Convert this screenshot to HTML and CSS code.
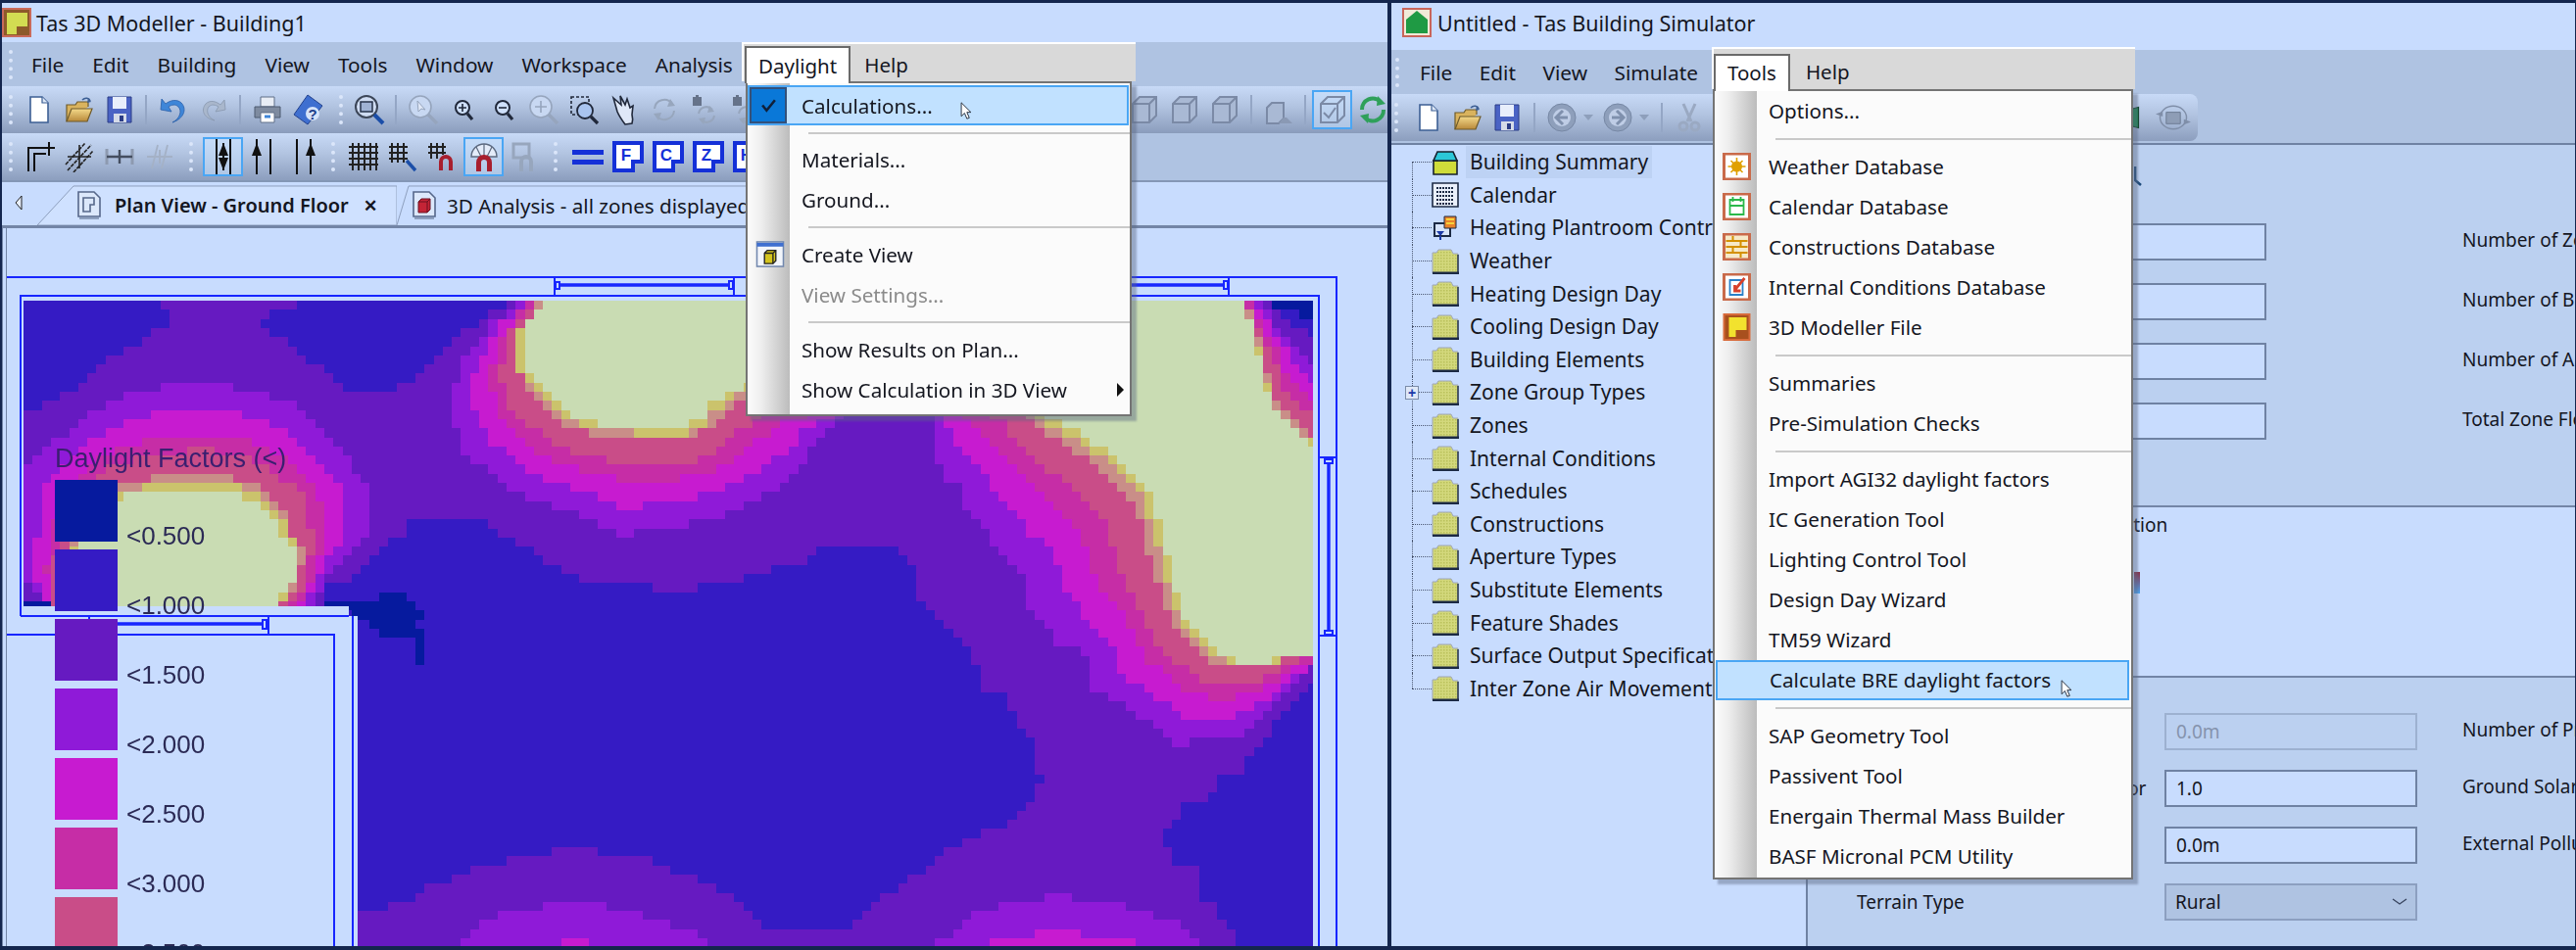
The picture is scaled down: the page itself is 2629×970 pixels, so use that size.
FILE: index.html
```html
<!DOCTYPE html>
<html lang="en">
<head>
<meta charset="utf-8">
<title>Tas</title>
<link rel="stylesheet" href="styles.css">
</head>
<body>
<svg class="defs" width="0" height="0">
  <defs>
    <linearGradient id="gfold" x1="0" y1="0" x2="0" y2="1"><stop offset="0" stop-color="#f4d98a"/><stop offset="1" stop-color="#b8893a"/></linearGradient>
    <pattern id="hatch" width="3" height="3" patternUnits="userSpaceOnUse"><rect width="3" height="3" fill="#d3d87c"/><rect width="1.5" height="1.5" fill="#b9c05a"/></pattern>
    <symbol id="doc" viewBox="0 0 32 32"><path d="M7 3h12l6 6v20H7z" fill="#fff" stroke="#3d5f94" stroke-width="1.6"/><path d="M19 3v6h6" fill="#dfe9f8" stroke="#3d5f94" stroke-width="1.2"/></symbol>
    <symbol id="plandoc" viewBox="0 0 26 30"><path d="M2 1h16l6 6v19H2z" fill="#dce8fb" stroke="#56678a" stroke-width="1.6"/><path d="M7 7h11v7h-4v7H7z" fill="none" stroke="#56678a" stroke-width="1.6"/><path d="M3 28h20" stroke="#8ea0bf" stroke-width="2"/></symbol>
    <symbol id="doc3d" viewBox="0 0 26 30"><path d="M2 1h16l6 6v19H2z" fill="#dce8fb" stroke="#56678a" stroke-width="1.6"/><path d="M7 11l3-3h9v11l-3 3H7z" fill="#c42436" stroke="#6a1020"/><path d="M7 11h9v11M16 11l3-3" fill="none" stroke="#6a1020"/><path d="M3 28h20" stroke="#8ea0bf" stroke-width="2"/></symbol>
    <symbol id="folder" viewBox="0 0 32 32"><path d="M3 28V11h9l2-3h11v5" fill="#d9b35e" stroke="#6e5a2a" stroke-width="1.2"/><path d="M3 28l5-13h21l-5 13z" fill="url(#gfold)" stroke="#6e5a2a" stroke-width="1.2"/><path d="M19 6c3-3 7-2 8 1" fill="none" stroke="#3d5f94" stroke-width="1.6"/><path d="M25 4l3 4-4 1z" fill="#3d5f94"/></symbol>
    <symbol id="save" viewBox="0 0 32 32"><path d="M4 3h24v26H4z" fill="#4a63c4" stroke="#2b3c86"/><path d="M9 3h14v12H9z" fill="#e8eefb"/><path d="M10 20h13v9H10z" fill="#d5dbe8"/><path d="M16 22h4v6h-4z" fill="#2b3c86"/></symbol>
    <symbol id="undo" viewBox="0 0 32 32"><path d="M15 29c8-4 10-12 6-16-3-3-7-2-10 0l3 5-11-2 1-11 4 5c5-4 12-5 16-1 6 6 3 16-9 20z" fill="#3f86d8" stroke="#2a5ea8" stroke-width=".8"/></symbol>
    <symbol id="redo" viewBox="0 0 32 32"><path d="M17 27c-7-3-9-10-6-14 3-3 7-2 10 0l-3 5 10-2-1-10-4 5c-5-4-11-5-15-1-5 6-3 14 9 17z" fill="#a9b7cc" stroke="#8897ad" stroke-width=".8"/></symbol>
    <symbol id="print" viewBox="0 0 32 32"><path d="M9 3h14v10H9z" fill="#e8edf5" stroke="#5f6f88"/><path d="M3 13h26v11H3z" fill="#7e8ba0" stroke="#4d5a70"/><path d="M9 19h14v10H9z" fill="#fff" stroke="#5f6f88"/><path d="M13 23h6" stroke="#3f86d8" stroke-width="3"/></symbol>
    <symbol id="book" viewBox="0 0 32 32"><path d="M16 1L31 12 16 31 2 21z" fill="#3f6fd0" stroke="#23418c"/><circle cx="21" cy="20" r="7" fill="#d7e4fa"/><text x="21" y="26" font-size="15" font-family="Liberation Sans" font-weight="700" text-anchor="middle" fill="#23418c">?</text></symbol>
    <symbol id="zoom" viewBox="0 0 32 32"><circle cx="13" cy="13" r="11" fill="#cfdcf2" stroke="#3c4658" stroke-width="2"/><rect x="7" y="8" width="12" height="10" fill="#9fb2d4" stroke="#26324a" stroke-width="1.5"/><path d="M21 21l9 9" stroke="#1b4ea8" stroke-width="4"/></symbol>
    <symbol id="magg" viewBox="0 0 32 32"><circle cx="13" cy="13" r="11" fill="#c8d8f2" stroke="#96a5bd" stroke-width="1.6"/><path d="M21 21l9 9" stroke="#96a5bd" stroke-width="3.4"/><path d="M10 7l1 11 3-3 4 1z" fill="#dfe7f6" stroke="#96a5bd"/></symbol>
    <symbol id="magp" viewBox="0 0 32 32"><circle cx="15" cy="14" r="7" fill="#cfe0fa" stroke="#20283a" stroke-width="2"/><path d="M15 10v8M11 14h8" stroke="#20283a" stroke-width="1.6"/><path d="M20 20l5 6" stroke="#20283a" stroke-width="3.2"/></symbol>
    <symbol id="magm" viewBox="0 0 32 32"><circle cx="15" cy="14" r="7" fill="#cfe0fa" stroke="#20283a" stroke-width="2"/><path d="M11 14h8" stroke="#20283a" stroke-width="1.6"/><path d="M20 20l5 6" stroke="#20283a" stroke-width="3.2"/></symbol>
    <symbol id="magpg" viewBox="0 0 32 32"><circle cx="13" cy="13" r="11" fill="#c8d8f2" stroke="#96a5bd" stroke-width="1.6"/><path d="M13 7v12M7 13h12" stroke="#96a5bd" stroke-width="1.6"/><path d="M21 21l9 9" stroke="#96a5bd" stroke-width="3.4"/></symbol>
    <symbol id="magbox" viewBox="0 0 32 32"><path d="M3 3h18v18H3z" fill="none" stroke="#20283a" stroke-width="1.6" stroke-dasharray="3 2"/><circle cx="17" cy="17" r="8" fill="#a9c4ef" stroke="#20283a" stroke-width="1.8"/><path d="M23 23l7 7" stroke="#20283a" stroke-width="3.2"/></symbol>
    <symbol id="hand" viewBox="0 0 32 32"><path d="M5 4l8 7-1-9 5 9 2-6 3 9 3-2-1 9c1 4 1 6 0 9l-7 1c-3-4-6-8-8-13z" fill="#dfe8f8" stroke="#20283a" stroke-width="1.6"/></symbol>
    <symbol id="rot" viewBox="0 0 32 32"><path d="M6 15a10 10 0 0 1 18-5M26 17a10 10 0 0 1-18 5" fill="none" stroke="#97a6bd" stroke-width="2"/><path d="M22 5l5 7-8 1zM10 27l-5-7 8-1z" fill="#97a6bd"/></symbol>
    <symbol id="rot2" viewBox="0 0 32 32"><path d="M4 3h9v9H4z" fill="#66738a"/><path d="M7 1h3v3H7z" fill="#66738a"/><path d="M10 20a8 8 0 0 1 14-4M26 22a8 8 0 0 1-14 4" fill="none" stroke="#97a6bd" stroke-width="2"/><path d="M21 12l5 6-7 1zM15 31l-5-6 7-1z" fill="#97a6bd"/></symbol>
    <symbol id="cube" viewBox="0 0 32 32"><path d="M4 10l7-7h17v19l-7 7H4z" fill="#a9b9d4" stroke="#7b8aa6" stroke-width="2"/><path d="M4 10h17v19M21 10l7-7" fill="none" stroke="#7b8aa6" stroke-width="2"/></symbol>
    <symbol id="cubef" viewBox="0 0 32 32"><path d="M4 14l5-5h12v16l-5 5H4z" fill="#a9b9d4" stroke="#7b8aa6" stroke-width="2"/><path d="M16 30h14l-6-6h-3" fill="#8a99b4"/></symbol>
    <symbol id="cubec" viewBox="0 0 32 32"><path d="M4 10l7-7h17v19l-7 7H4z" fill="none" stroke="#7b8aa6" stroke-width="2"/><path d="M4 10h17v19M21 10l7-7" fill="none" stroke="#7b8aa6" stroke-width="2"/><path d="M7 19l5 5 7-10" fill="none" stroke="#7b8aa6" stroke-width="2"/></symbol>
    <symbol id="refresh" viewBox="0 0 32 32"><path d="M5 16a11 11 0 0 1 19-8M27 16a11 11 0 0 1-19 8" fill="none" stroke="#2fa05a" stroke-width="4"/><path d="M21 2l8 8-9 2zM11 30l-8-8 9-2z" fill="#2fa05a"/></symbol>
    <symbol id="wall" viewBox="0 0 32 32"><path d="M5 31V7h20M11 31V13h12" fill="none" stroke="#111" stroke-width="2"/><path d="M26 1v14M20 7h12" stroke="#111" stroke-width="2"/></symbol>
    <symbol id="cross" viewBox="0 0 32 32"><path d="M4 30L28 4M2 24L22 2M10 32L30 10" fill="none" stroke="#222" stroke-width="1.6" stroke-dasharray="4 1"/><path d="M16 4v24M4 16h24" stroke="#222" stroke-width="1.6"/></symbol>
    <symbol id="dim" viewBox="0 0 32 32"><path d="M3 8v16M29 8v16" stroke="#8d9ab0" stroke-width="3"/><path d="M16 9v14M3 16h26" stroke="#444e60" stroke-width="2.4"/></symbol>
    <symbol id="dimg" viewBox="0 0 32 32"><path d="M8 28L14 4M18 28L24 4" stroke="#a4b1c6" stroke-width="1.8"/><path d="M3 16h26M16 9v14" stroke="#a4b1c6" stroke-width="2"/></symbol>
    <symbol id="v1" viewBox="0 0 32 40"><path d="M9 2v36M23 2v36M16 6v28" stroke="#111" stroke-width="2"/><path d="M16 6l-5 13h10zM16 34l-5-13h10z" fill="#111"/></symbol>
    <symbol id="v2" viewBox="0 0 32 40"><path d="M9 2v36M23 2v36" stroke="#111" stroke-width="2"/><path d="M9 6l-5 13h10z" fill="#111"/></symbol>
    <symbol id="v3" viewBox="0 0 32 40"><path d="M9 2v36M23 2v36" stroke="#111" stroke-width="2"/><path d="M23 6l-5 13h10z" fill="#111"/></symbol>
    <symbol id="grid" viewBox="0 0 32 32"><path d="M5 2v28M11 2v28M17 2v28M23 2v28M29 2v28M1 6h30M1 12h30M1 18h30M1 24h30" stroke="#222" stroke-width="2"/></symbol>
    <symbol id="gridm" viewBox="0 0 32 32"><path d="M4 2v20M10 2v20M16 2v20M1 6h19M1 12h19M1 18h19" stroke="#222" stroke-width="2"/><path d="M19 20l9 10" stroke="#1b4ea8" stroke-width="3.4"/></symbol>
    <symbol id="gridu" viewBox="0 0 32 32"><path d="M3 2v16M9 2v16M15 2v12M0 6h18M0 12h18" stroke="#222" stroke-width="2"/><path d="M11 30V21a7 7 0 0 1 14 0v9h-4v-9a3 3 0 0 0-6 0v9z" fill="#a81f2e"/></symbol>
    <symbol id="arcu" viewBox="0 0 32 32"><path d="M3 16a13 13 0 0 1 26 0z" fill="#e4ecfa" stroke="#5d6a80" stroke-width="1.4"/><path d="M16 3v13M8 6l5 10M24 6l-5 10" stroke="#5d6a80" stroke-width="1.2"/><path d="M8 31V22a8 8 0 0 1 16 0v9h-5v-9a3 3 0 0 0-6 0v9z" fill="#a81f2e"/></symbol>
    <symbol id="grayu" viewBox="0 0 32 32"><path d="M5 3h16v14H5z" fill="none" stroke="#97a6bd" stroke-width="3"/><path d="M11 31V21a7 7 0 0 1 14 0v10h-4V21a3 3 0 0 0-6 0v10z" fill="#97a6bd"/></symbol>
    <symbol id="sum" viewBox="0 0 28 26"><path d="M2 11h24v14H2z" fill="#cfdc3a" stroke="#16202e" stroke-width="1.6"/><path d="M6 2h16l4 9H2z" fill="#2cc7d8" stroke="#16202e" stroke-width="1.6"/></symbol>
    <symbol id="cal" viewBox="0 0 28 26"><path d="M1 1h26v24H1z" fill="#eaf0fb" stroke="#1c2a44" stroke-width="1.6"/><path d="M5 6h18M5 10h18M5 14h18M5 18h18M5 22h18" stroke="#1c2a44" stroke-width="2.2" stroke-dasharray="2 1"/></symbol>
    <symbol id="plant" viewBox="0 0 28 26"><path d="M3 8h16v13H3z" fill="#d7e4fa" stroke="#1c2a44" stroke-width="2"/><path d="M13 1h12v12H13z" fill="#e8822a" stroke="#1c2a44"/><path d="M15 4h8M15 8h8" stroke="#f6d23c" stroke-width="2"/><path d="M5 16l4 5 4-5z" fill="#1b3aa8"/><path d="M9 21v4" stroke="#1b3aa8" stroke-width="2"/></symbol>
    <symbol id="tfold" viewBox="0 0 28 26"><path d="M1 25V4h4l2-3h13l2 4h5v20z" fill="url(#hatch)" stroke="#9fa7b8" stroke-width="1"/><path d="M1 25h27" stroke="#1c2a44" stroke-width="3"/><path d="M27 6v19" stroke="#1c2a44" stroke-width="1.4"/></symbol>
    <symbol id="w-sun" viewBox="0 0 28 28"><rect x="1" y="1" width="26" height="26" fill="#fff" stroke="#c96a4a" stroke-width="3"/><circle cx="14" cy="14" r="5.5" fill="#e0a000"/><path d="M14 5v18M5 14h18M8 8l12 12M20 8L8 20" stroke="#e0a000" stroke-width="1.6"/></symbol>
    <symbol id="w-cal" viewBox="0 0 28 28"><rect x="1" y="1" width="26" height="26" fill="#fff" stroke="#c96a4a" stroke-width="3"/><path d="M7 7h14v15H7zM7 13h14M10 4v5M18 4v5" fill="none" stroke="#2ab84a" stroke-width="1.8"/></symbol>
    <symbol id="w-con" viewBox="0 0 28 28"><rect x="1" y="1" width="26" height="26" fill="#f6e9c8" stroke="#c96a4a" stroke-width="3"/><path d="M3 8h22M3 14h22M3 20h22M10 3v5M18 8v6M10 14v6M18 20v5" stroke="#d49000" stroke-width="2"/></symbol>
    <symbol id="w-ic" viewBox="0 0 28 28"><rect x="1" y="1" width="26" height="26" fill="#fff" stroke="#c96a4a" stroke-width="3"/><path d="M7 7h13v15H7z" fill="none" stroke="#2a80c8" stroke-width="1.8"/><path d="M22 5L12 17M12 12v6h6" fill="none" stroke="#d8402a" stroke-width="2.8"/></symbol>
    <symbol id="w-3d" viewBox="0 0 28 28"><rect x="1" y="1" width="26" height="26" fill="#a8501e" stroke="#d86a3a" stroke-width="2"/><path d="M6 4h18v13H13v7H6z" fill="#f2e22e"/></symbol>
    <symbol id="w-view" viewBox="0 0 30 28"><rect x="1" y="1" width="28" height="26" fill="#f2f5fb" stroke="#7288ae" stroke-width="1.6"/><path d="M1 2h28v4H1z" fill="#3f6fd0"/><path d="M9 13l3-3h9v11l-3 3H9z" fill="#d4c41e" stroke="#222" stroke-width="1.4"/><path d="M9 13h9v11M18 13l3-3" fill="none" stroke="#222" stroke-width="1.4"/></symbol>
    <symbol id="a-3d" viewBox="0 0 30 30"><rect x="1" y="1" width="28" height="28" fill="#8d5a2a" stroke="#c96a5a" stroke-width="2"/><path d="M5 5h21v14H15v8H5z" fill="#d2dc52"/></symbol>
    <symbol id="a-sim" viewBox="0 0 30 30"><rect x="1" y="1" width="28" height="28" fill="#f0ead8" stroke="#c9655a" stroke-width="2"/><path d="M4 26V12l11-9 11 9v14z" fill="#1f9a44"/></symbol>
    <symbol id="back" viewBox="0 0 32 32"><circle cx="16" cy="16" r="14" fill="#8e9fbb" stroke="#7788a5"/><circle cx="16" cy="16" r="9" fill="#bfcde6"/><path d="M17 9l-7 7 7 7M10 16h12" fill="none" stroke="#7f90ad" stroke-width="3"/></symbol>
    <symbol id="fwd" viewBox="0 0 32 32"><circle cx="16" cy="16" r="14" fill="#8e9fbb" stroke="#7788a5"/><circle cx="16" cy="16" r="9" fill="#bfcde6"/><path d="M15 9l7 7-7 7M22 16H10" fill="none" stroke="#7f90ad" stroke-width="3"/></symbol>
    <symbol id="cut" viewBox="0 0 32 32"><path d="M10 2l8 18M22 2l-8 18" stroke="#9aa9c2" stroke-width="3"/><circle cx="10" cy="25" r="4" fill="none" stroke="#9aa9c2" stroke-width="3"/><circle cx="22" cy="25" r="4" fill="none" stroke="#9aa9c2" stroke-width="3"/></symbol>
    <symbol id="door" viewBox="0 0 32 32"><path d="M6 6l16-4v28L6 26z" fill="#15874a" stroke="#0a3f22" stroke-width="1.6"/></symbol>
    <symbol id="graycube" viewBox="0 0 40 32"><ellipse cx="20" cy="16" rx="15" ry="13" fill="none" stroke="#7f8ea8" stroke-width="1.6"/><path d="M12 10h16v13H12z" fill="#8e9db6" stroke="#69788f"/><path d="M0 12l8-3v6zM40 21l-8-3v6z" fill="#7f8ea8"/></symbol>
    <symbol id="ptr" viewBox="0 0 14 22"><path d="M1 1v17l4-4 3 7 3-1-3-7h5z" fill="#fff" stroke="#2b3442" stroke-width="1.2"/></symbol>
  </defs>
</svg>

<div class="desk">
  <section class="win win-l">
    <header class="title"><svg class="app"><use href="#a-3d"/></svg><span>Tas 3D Modeller - Building1</span></header>
    <nav class="menubar mb-l">
      <i class="grip"></i>
      <span>File</span><span>Edit</span><span>Building</span><span>View</span><span>Tools</span><span>Window</span><span>Workspace</span><span>Analysis</span>
    </nav>
    <div class="tb tb-a">
      <i class="grip"></i>
      <b class="btn"><svg class="ic"><use href="#doc"/></svg></b>
      <b class="btn"><svg class="ic"><use href="#folder"/></svg></b>
      <b class="btn"><svg class="ic"><use href="#save"/></svg></b>
      <i class="vs"></i>
      <b class="btn"><svg class="ic"><use href="#undo"/></svg></b>
      <b class="btn"><svg class="ic"><use href="#redo"/></svg></b>
      <i class="vs"></i>
      <b class="btn"><svg class="ic"><use href="#print"/></svg></b>
      <b class="btn"><svg class="ic"><use href="#book"/></svg></b>
      <i class="grip gap-g"></i>
      <b class="btn"><svg class="ic"><use href="#zoom"/></svg></b>
      <i class="vs"></i>
      <b class="btn"><svg class="ic"><use href="#magg"/></svg></b>
      <b class="btn"><svg class="ic"><use href="#magp"/></svg></b>
      <b class="btn"><svg class="ic"><use href="#magm"/></svg></b>
      <b class="btn"><svg class="ic"><use href="#magpg"/></svg></b>
      <b class="btn"><svg class="ic"><use href="#magbox"/></svg></b>
      <b class="btn"><svg class="ic"><use href="#hand"/></svg></b>
      <b class="btn"><svg class="ic"><use href="#rot"/></svg></b>
      <b class="btn"><svg class="ic"><use href="#rot2"/></svg></b>
      <b class="btn"><svg class="ic"><use href="#rot2"/></svg></b>
      <span class="tb-right">
        <b class="btn"><svg class="ic"><use href="#cube"/></svg></b>
        <b class="btn"><svg class="ic"><use href="#cube"/></svg></b>
        <b class="btn"><svg class="ic"><use href="#cube"/></svg></b>
        <i class="vs"></i>
        <b class="btn"><svg class="ic"><use href="#cubef"/></svg></b>
        <i class="vs"></i>
        <b class="btn on"><svg class="ic"><use href="#cubec"/></svg></b>
        <b class="btn"><svg class="ic"><use href="#refresh"/></svg></b>
      </span>
    </div>
    <div class="row2">
      <div class="tb tb-b">
        <i class="grip"></i>
        <b class="btn"><svg class="ic"><use href="#wall"/></svg></b>
        <b class="btn"><svg class="ic"><use href="#cross"/></svg></b>
        <b class="btn"><svg class="ic"><use href="#dim"/></svg></b>
        <b class="btn"><svg class="ic"><use href="#dimg"/></svg></b>
        <i class="grip gap-h"></i>
        <b class="btn on"><svg class="ic ic-t" viewBox="0 0 32 40"><use href="#v1"/></svg></b>
        <b class="btn"><svg class="ic ic-t" viewBox="0 0 32 40"><use href="#v2"/></svg></b>
        <b class="btn"><svg class="ic ic-t" viewBox="0 0 32 40"><use href="#v3"/></svg></b>
        <i class="grip gap-h2"></i>
        <b class="btn"><svg class="ic"><use href="#grid"/></svg></b>
        <b class="btn"><svg class="ic"><use href="#gridm"/></svg></b>
        <b class="btn"><svg class="ic"><use href="#gridu"/></svg></b>
        <b class="btn on"><svg class="ic"><use href="#arcu"/></svg></b>
        <b class="btn"><svg class="ic"><use href="#grayu"/></svg></b>
        <i class="grip gap-h"></i>
        <b class="btn"><i class="eq"></i></b>
        <b class="btn"><svg class="lb" viewBox="0 0 32 32"><path d="M2 2h28v19h-9v9H2z"/><text x="14" y="20">F</text></svg></b>
        <b class="btn"><svg class="lb" viewBox="0 0 32 32"><path d="M2 2h28v19h-9v9H2z"/><text x="14" y="20">C</text></svg></b>
        <b class="btn"><svg class="lb" viewBox="0 0 32 32"><path d="M2 2h28v19h-9v9H2z"/><text x="14" y="20">Z</text></svg></b>
        <b class="btn"><svg class="lb" viewBox="0 0 32 32"><path d="M2 2h28v19h-9v9H2z"/><text x="14" y="20">H</text></svg></b>
      </div>
    </div>
    <div class="tabs">
      <svg class="tab-arrow" viewBox="0 0 10 18"><path d="M8 2L2 9l6 7z" fill="#e8f0ff" stroke="#222"/></svg>
      <div class="tab tab-on">
        <svg class="tabshape" viewBox="0 0 367 42" preserveAspectRatio="none"><path d="M0 42L37 1h330v41z" fill="#cfe1ff" stroke="#8c9dbc"/></svg>
        <svg class="tabic"><use href="#plandoc"/></svg>
        <span>Plan View - Ground Floor</span>
        <em class="x">✕</em>
      </div>
      <div class="tab tab-off">
        <svg class="tabshape2" viewBox="0 0 420 42" preserveAspectRatio="none"><path d="M0 42L12 1h408" fill="none" stroke="#8c9dbc"/></svg>
        <svg class="tabic"><use href="#doc3d"/></svg>
        <span>3D Analysis - all zones displayed</span>
      </div>
    </div>
    <main class="plan">
      <canvas id="heat" class="heat" width="1316" height="660"></canvas>
      <svg class="lines" viewBox="0 233 1414 733">
        <g fill="none" stroke="#1726ff" stroke-width="2">
          <path d="M5 283H1362V966"/>
          <path d="M5 648H339V966"/>
          <path d="M19 629V302H1344V966"/>
          <path d="M19 629H354"/>
          <path d="M358 629V966"/>
          <path d="M564 283V302M747 283V302M1252 283V302"/>
          <path d="M89 629V648M272 629V648"/>
          <path d="M1344 467H1362M1344 649H1362"/>
          <g stroke-width="3.4">
            <path d="M568 291H742M950 291H1247M92 637H266M1354 473V644"/>
          </g>
          <path d="M565 288h4v7h-4zM742 287h4v8h-4zM1247 287h4v8h-4zM266 633h4v9h-4zM1350 469h8v4h-8zM1350 644h8v4h-8z"/>
        </g>
      </svg>
      <aside class="legend">
        <h2>Daylight Factors (&lt;)</h2>
        <div class="lrow"><i class="sw s0"></i><span>&lt;0.500</span></div>
        <div class="lrow"><i class="sw s1"></i><span>&lt;1.000</span></div>
        <div class="lrow"><i class="sw s2"></i><span>&lt;1.500</span></div>
        <div class="lrow"><i class="sw s3"></i><span>&lt;2.000</span></div>
        <div class="lrow"><i class="sw s4"></i><span>&lt;2.500</span></div>
        <div class="lrow"><i class="sw s5"></i><span>&lt;3.000</span></div>
        <div class="lrow"><i class="sw s6"></i><span>&lt;3.500</span></div>
      </aside>
    </main>

    <div class="pop pop-l">
      <div class="popbar pb-l"><span class="ptab">Daylight</span><span class="pitem">Help</span></div>
      <div class="drop">
        <div class="item sel"><span class="gut chk"><svg viewBox="0 0 16 14" class="tick"><path d="M2 7l4 5 8-10" fill="none" stroke="#10203a" stroke-width="2.4"/></svg></span><span>Calculations...</span><svg class="ptr ptr-a"><use href="#ptr"/></svg></div>
        <div class="sep sep-first"></div>
        <div class="item"><span class="gut"></span><span>Materials...</span></div>
        <div class="item"><span class="gut"></span><span>Ground...</span></div>
        <div class="sep"></div>
        <div class="item"><span class="gut"><svg class="mi"><use href="#w-view"/></svg></span><span>Create View</span></div>
        <div class="item off"><span class="gut"></span><span>View Settings...</span></div>
        <div class="sep"></div>
        <div class="item"><span class="gut"></span><span>Show Results on Plan...</span></div>
        <div class="item"><span class="gut"></span><span>Show Calculation in 3D View</span><i class="sub"></i></div>
      </div>
    </div>
  </section>

  <section class="win win-r">
    <header class="title title-r"><svg class="app app-r"><use href="#a-sim"/></svg><span>Untitled - Tas Building Simulator</span></header>
    <nav class="menubar mb-r">
      <i class="grip"></i>
      <span>File</span><span>Edit</span><span>View</span><span>Simulate</span>
    </nav>
    <div class="toolrow">
      <div class="tb tb-c">
        <i class="grip"></i>
        <b class="btn"><svg class="ic"><use href="#doc"/></svg></b>
        <b class="btn"><svg class="ic"><use href="#folder"/></svg></b>
        <b class="btn"><svg class="ic"><use href="#save"/></svg></b>
        <i class="vs"></i>
        <b class="btn"><svg class="ic"><use href="#back"/></svg></b>
        <b class="drp"></b>
        <b class="btn"><svg class="ic"><use href="#fwd"/></svg></b>
        <b class="drp"></b>
        <i class="vs"></i>
        <b class="btn"><svg class="ic"><use href="#cut"/></svg></b>
        <span class="tb-right2">
          <b class="btn btn-door"><svg class="ic ic-s"><use href="#door"/></svg></b>
          <b class="btn btn-wide"><svg class="ic ic-w" viewBox="0 0 40 32"><use href="#graycube"/></svg></b>
        </span>
      </div>
    </div>
    <div class="body">
      <ul class="tree">
        <li class="node"><i class="stub"></i><svg class="ti"><use href="#sum"/></svg><span class="lbl cur">Building Summary</span></li>
        <li class="node"><i class="stub"></i><svg class="ti"><use href="#cal"/></svg><span class="lbl">Calendar</span></li>
        <li class="node"><i class="stub"></i><svg class="ti"><use href="#plant"/></svg><span class="lbl">Heating Plantroom Controls</span></li>
        <li class="node"><i class="stub"></i><svg class="ti"><use href="#tfold"/></svg><span class="lbl">Weather</span></li>
        <li class="node"><i class="stub"></i><svg class="ti"><use href="#tfold"/></svg><span class="lbl">Heating Design Day</span></li>
        <li class="node"><i class="stub"></i><svg class="ti"><use href="#tfold"/></svg><span class="lbl">Cooling Design Day</span></li>
        <li class="node"><i class="stub"></i><svg class="ti"><use href="#tfold"/></svg><span class="lbl">Building Elements</span></li>
        <li class="node"><i class="stub"></i><i class="plus"></i><svg class="ti"><use href="#tfold"/></svg><span class="lbl">Zone Group Types</span></li>
        <li class="node"><i class="stub"></i><svg class="ti"><use href="#tfold"/></svg><span class="lbl">Zones</span></li>
        <li class="node"><i class="stub"></i><svg class="ti"><use href="#tfold"/></svg><span class="lbl">Internal Conditions</span></li>
        <li class="node"><i class="stub"></i><svg class="ti"><use href="#tfold"/></svg><span class="lbl">Schedules</span></li>
        <li class="node"><i class="stub"></i><svg class="ti"><use href="#tfold"/></svg><span class="lbl">Constructions</span></li>
        <li class="node"><i class="stub"></i><svg class="ti"><use href="#tfold"/></svg><span class="lbl">Aperture Types</span></li>
        <li class="node"><i class="stub"></i><svg class="ti"><use href="#tfold"/></svg><span class="lbl">Substitute Elements</span></li>
        <li class="node"><i class="stub"></i><svg class="ti"><use href="#tfold"/></svg><span class="lbl">Feature Shades</span></li>
        <li class="node"><i class="stub"></i><svg class="ti"><use href="#tfold"/></svg><span class="lbl">Surface Output Specification</span></li>
        <li class="node last"><i class="stub"></i><svg class="ti"><use href="#tfold"/></svg><span class="lbl">Inter Zone Air Movement</span></li>
      </ul>
      <div class="main">
        <div class="panel p-top">
          <svg class="frag" viewBox="0 0 8 22"><path d="M1 2v14l6 5" fill="none" stroke="#1d4a7a" stroke-width="2.6"/></svg>
          <div class="form f-top">
            <input class="fld" value=""><span class="rl">Number of Zones</span>
            <input class="fld" value=""><span class="rl">Number of Buildings</span>
            <input class="fld" value=""><span class="rl">Number of Apertures</span>
            <input class="fld" value=""><span class="rl">Total Zone Floor Area</span>
          </div>
        </div>
        <div class="panel p-mid">
          <span class="desc">Description</span>
          <i class="frag2"></i>
        </div>
        <div class="panel p-bot">
          <div class="form f-bot">
            <span class="ll">Building Height</span><input class="fld dis" value="0.0m" disabled><span class="rl">Number of Preconditioning Days</span>
            <span class="ll tight">Building Height Adjustment Factor</span><input class="fld" value="1.0"><span class="rl">Ground Solar Reflectance</span>
            <span class="ll">Altitude</span><input class="fld" value="0.0m"><span class="rl">External Pollutant</span>
            <span class="ll">Terrain Type</span><div class="sel-box"><span>Rural</span><svg viewBox="0 0 16 8" class="chev"><path d="M1 1l7 5 7-5" fill="none" stroke="#3a4660" stroke-width="1.4"/></svg></div><span></span>
          </div>
        </div>
      </div>
    </div>

    <div class="pop pop-r">
      <div class="popbar pb-r"><span class="ptab">Tools</span><span class="pitem">Help</span></div>
      <div class="drop">
        <div class="item"><span class="gut"></span><span>Options...</span></div>
        <div class="sep"></div>
        <div class="item"><span class="gut"><svg class="mi2"><use href="#w-sun"/></svg></span><span>Weather Database</span></div>
        <div class="item"><span class="gut"><svg class="mi2"><use href="#w-cal"/></svg></span><span>Calendar Database</span></div>
        <div class="item"><span class="gut"><svg class="mi2"><use href="#w-con"/></svg></span><span>Constructions Database</span></div>
        <div class="item"><span class="gut"><svg class="mi2"><use href="#w-ic"/></svg></span><span>Internal Conditions Database</span></div>
        <div class="item"><span class="gut"><svg class="mi2"><use href="#w-3d"/></svg></span><span>3D Modeller File</span></div>
        <div class="sep"></div>
        <div class="item"><span class="gut"></span><span>Summaries</span></div>
        <div class="item"><span class="gut"></span><span>Pre-Simulation Checks</span></div>
        <div class="sep"></div>
        <div class="item"><span class="gut"></span><span>Import AGI32 daylight factors</span></div>
        <div class="item"><span class="gut"></span><span>IC Generation Tool</span></div>
        <div class="item"><span class="gut"></span><span>Lighting Control Tool</span></div>
        <div class="item"><span class="gut"></span><span>Design Day Wizard</span></div>
        <div class="item"><span class="gut"></span><span>TM59 Wizard</span></div>
        <div class="item sel sel2"><span class="gut"></span><span>Calculate BRE daylight factors</span><svg class="ptr ptr-b"><use href="#ptr"/></svg></div>
        <div class="sep"></div>
        <div class="item"><span class="gut"></span><span>SAP Geometry Tool</span></div>
        <div class="item"><span class="gut"></span><span>Passivent Tool</span></div>
        <div class="item"><span class="gut"></span><span>Energain Thermal Mass Builder</span></div>
        <div class="item"><span class="gut"></span><span>BASF Micronal PCM Utility</span></div>
      </div>
    </div>
  </section>
</div>
<script src="heatmap.js"></script>
</body>
</html>
```
FILE: styles.css
```css
* { box-sizing: border-box; }
html, body { margin: 0; padding: 0; }
body {
  width: 2629px; height: 970px; overflow: hidden;
  background: #c8dcfe; color: #14161f;
  font-family: "Noto Sans", "Open Sans", sans-serif; font-size: 19px;
}
.defs { position: absolute; }
i, em { font-style: normal; }
b { font-weight: 400; }
.desk {
  display: flex; width: 2629px; height: 970px;
  border: solid #14264e; border-width: 3px 1px 4px 2px;
  background: #c8dcfe;
}
.win { position: relative; display: flex; flex-direction: column; min-width: 0; }
.win-l { width: 1414px; flex: none; overflow: hidden; }
.win-r { flex: 1; border-left: 4px solid #14264e; overflow: hidden; }

.title { display: flex; align-items: center; gap: 5px; height: 40px; flex: none; font-size: 21.5px; background: #c8dcfe; }
.title-r { height: 48px; padding: 0 0 8px 11px; }
.app { width: 30px; height: 30px; flex: none; }
.app-r { margin-right: 1px; }

.menubar { display: flex; align-items: center; flex: none; background: #afc3e2; font-size: 20.8px; }
.mb-l { height: 45px; }
.mb-r { height: 45px; }
.mb-l .grip { margin: 0 19px 0 7px; }
.mb-r .grip { margin: 0 21px 0 4px; }
.mb-l span { margin-right: 29px; }
.mb-r span { margin-right: 27.5px; }

.grip { display: block; flex: none; width: 4px; height: 30px; border-left: 4px dotted #dbe6fa; }
.tb { display: flex; align-items: center; flex: none; height: 48px; background: linear-gradient(#c8daf7 0, #b1c3e0 45%, #8c9ebe 100%); }
.tb-a { padding-left: 7px; border-bottom: 1px solid #8a9cbb; }
.tb-a > .grip { margin-right: 6px; }
.tb-b > .grip:first-child { margin-left: 7px; margin-right: 6px; }
.row2 { height: 50px; flex: none; background: #afc3e2; border-bottom: 2px solid #8497b6; }
.tb-b { width: 1000px; height: 48px; }
.gap-g { margin: 0 10px 0 12px; }
.gap-h { margin: 0 10px; }
.gap-h2 { margin: 0 8px; }
.btn { display: flex; align-items: center; justify-content: center; width: 41px; height: 40px; flex: none; border: 2px solid transparent; }
.btn.on { background: rgba(200, 225, 255, .55); border-color: #4aa6f4; }
.ic { width: 32px; height: 32px; display: block; }
.ic-t { height: 40px; width: 32px; }
.vs { display: block; flex: none; width: 2px; height: 30px; margin: 0 6px; background: #94a6c5; }
.tb-right { margin-left: auto; display: flex; align-items: center; margin-right: -5px; }
.tb-right .btn { width: 41px; }
.eq { display: block; width: 32px; height: 15px; border: solid #1430d8; border-width: 5px 0; }
.lb { width: 32px; height: 32px; }
.lb path { fill: #fff; stroke: #1430d8; stroke-width: 4; }
.lb text { font: 700 17px "Liberation Sans", sans-serif; fill: #1430d8; text-anchor: middle; }

.tabs { display: flex; align-items: flex-end; height: 47px; flex: none; background: #c8dcfe; border-bottom: 3px solid #7385a6; position: relative; }
.tab-arrow { width: 10px; height: 18px; margin: 0 0 3px 12px; align-self: center; flex: none; }
.tab { position: relative; display: flex; align-items: center; height: 41px; flex: none; }
.tabshape, .tabshape2 { position: absolute; left: 0; top: 0; width: 100%; height: 100%; }
.tab > span, .tab > em, .tabic { position: relative; }
.tab-on { width: 367px; margin-left: 14px; padding-left: 40px; font-weight: 600; font-size: 20px; white-space: nowrap; }
.tab-on .tabic { margin-right: 13px; }
.tab-off { width: 420px; padding-left: 15px; font-size: 20.6px; white-space: nowrap; }
.tabic { width: 26px; height: 30px; flex: none; margin-right: 10px; }
.x { margin-left: 15px; font-size: 17px; font-weight: 700; }

.plan { position: relative; flex: 1; min-height: 0; overflow: hidden; background: #c8dcfe; border-left: 1px solid #7385a6; }
.plan::before { content: ""; position: absolute; left: 3px; top: 0; bottom: 0; width: 1px; background: #7385a6; }
.heat { position: absolute; left: 21px; top: 74px; width: 1316px; height: 660px; }
.lines { position: absolute; left: -1px; top: 0; width: 1414px; height: 733px; }
.legend { position: absolute; left: 53px; top: 222px; color: #2b2a55; font-family: "Liberation Sans", Arial, sans-serif; font-size: 26px; }
.legend h2 { margin: 0 0 9px; font-size: 27px; font-weight: 400; line-height: 26px; white-space: nowrap; color: #3a1f70; }
.lrow { display: flex; align-items: flex-end; gap: 9px; height: 71px; }
.lrow span { line-height: 20px; margin-bottom: 4px; }
.sw { display: block; width: 64px; height: 63px; align-self: flex-start; }
.s0 { background: #061a9e; } .s1 { background: #351bc4; } .s2 { background: #661ac1; }
.s3 { background: #8f1ad8; } .s4 { background: #c71bd0; } .s5 { background: #c62da6; } .s6 { background: #c94d88; }

.pop { position: absolute; }
.pop-l { left: 755px; top: 40px; width: 402px; }
.pop-r { left: 327px; top: 45px; width: 432px; }
.popbar { display: flex; background: #d9d9d9; border: solid #fff; border-width: 2px 0 0 2px; align-items: flex-end; font-size: 20.5px; }
.pb-l { height: 40px; padding-left: 1px; }
.pb-r { height: 43px; }
.ptab { position: relative; z-index: 2; background: #fff; border: solid #6a6a6a; border-width: 2px 2px 0; margin-bottom: -2px; }
.pb-l .ptab { height: 38px; padding: 4px 12px 0; }
.pb-r .ptab { height: 38px; padding: 3px 12px 0; }
.pb-l .pitem { margin-left: 14px; height: 34px; line-height: 34px; }
.pb-r .pitem { margin-left: 16px; height: 36px; line-height: 36px; }
.drop {
  position: relative; white-space: nowrap; font-size: 20.6px;
  border: 2px solid #747474;
  background: linear-gradient(to right, #fcfcfc 0, #eeeeee 14px, #bcbcbc 43px, #fbfbfb 43px);
  box-shadow: 5px 5px 2px rgba(90, 105, 130, .45);
}
.pop-l .drop { margin-left: 4px; width: 394px; padding: 2px 0 5px; }
.pop-l .sep { margin-bottom: 6px; }
.pop-l .sep-first { margin-bottom: 5px; }
.pop-r .drop { margin-left: 1px; width: 429px; padding: 0 0 1px; }
.pop-r .item { padding-bottom: 2px; }
.item { display: flex; align-items: center; height: 41px; position: relative; color: #14161f; }
.gut { width: 45px; flex: none; height: 100%; margin-right: 10px; display: flex; align-items: center; justify-content: center; }
.sel { background: #c1e1ff; box-shadow: inset 0 0 0 2px #4aa6f4; margin-right: 1px; }
.sel2 { margin: 0 2px 0 1px; }
.chk { background: #0a78d8; margin: 2px 10px 2px 2px; width: 38px; height: 37px; border: 2px solid #33507a; }
.chk + span { margin-left: 5px; }
.tick { width: 17px; height: 15px; }
.mi { width: 30px; height: 27px; }
.mi2 { width: 29px; height: 28px; }
.off { color: #8b8b8b; }
.sep { height: 2px; margin: 7px 0 7px 62px; background: #c9c9c9; }
.sub { margin-left: auto; margin-right: 6px; width: 0; height: 0; border: solid transparent; border-width: 7px 0 7px 7px; border-left-color: #111; }
.ptr { width: 12px; height: 18px; flex: none; }
.ptr-a { margin-left: 28px; margin-top: 10px; }
.ptr-b { margin-left: 10px; margin-top: 18px; }

.toolrow { height: 52px; flex: none; background: #afc3e2; border-bottom: 2px solid #6f82a3; }
.tb-c { width: 823px; height: 48px; border-radius: 0 8px 8px 0; padding-left: 3px; }
.tb-c > .grip { margin-right: 11px; }
.tb-c .btn { width: 40px; }
.tb-c .vs { margin: 0 7px; }
.drp { width: 0; height: 0; margin: 0 5px 0 2px; border: solid transparent; border-width: 6px 5px 0; border-top-color: #8e9fbb; }
.tb-right2 { margin-left: auto; display: flex; align-items: center; }
.tb-c .btn-door { margin-right: -5px; }
.ic-s { width: 24px; }
.tb-c .btn-wide { width: 50px; }
.ic-w { width: 36px; height: 30px; }

.body { flex: 1; min-height: 0; display: flex; }
.tree { list-style: none; margin: 0; padding: 1px 0 0 21px; width: 425px; flex: none; overflow: hidden; background: #c8dcfe; border-right: 2px solid #6f82a3; font-size: 21px; white-space: nowrap; }
.node { position: relative; display: flex; align-items: center; height: 33.6px; }
.node::before { content: ""; position: absolute; left: 0; top: 0; bottom: 0; border-left: 1px dotted #4a5670; }
.node:first-child::before { top: 50%; }
.node.last::before { bottom: 50%; }
.stub { display: block; width: 20px; height: 0; flex: none; border-top: 1px dotted #4a5670; }
.ti { width: 28px; height: 26px; flex: none; margin-right: 7px; }
.lbl { padding: 0 4px; height: 33px; line-height: 33px; }
.cur { background: #bdd2f4; }
.plus { position: absolute; left: -7px; top: 10px; width: 14px; height: 14px; background: #dfe8f8; border: 1px solid #7b8ca8; }
.plus::before { content: "+"; display: block; font: 700 14px/12px "Liberation Sans", sans-serif; color: #1b3aa8; text-align: center; }

.main { flex: 1; min-width: 0; display: flex; flex-direction: column; }
.panel { flex: none; overflow: hidden; }
.p-top { height: 370px; background: #bbd0f0; border-bottom: 2px solid #7385a6; padding-top: 20px; }
.frag { display: block; width: 8px; height: 22px; margin: 0 0 38px 333px; }
.form { display: grid; align-items: center; }
.f-top { grid-template-columns: 213px 1fr; column-gap: 200px; row-gap: 23px; grid-auto-rows: 38px; padding-left: 255px; }
.rl { white-space: nowrap; margin-top: -5px; }
.fld { width: 100%; height: 38px; padding: 0 10px; background: #c8dcfe; border: 2px solid #6f82a3; font: inherit; color: #14161f; outline: none; }
.dis { background: #bbd0f0; border-color: #9db1d0; color: #8593ad; }
.p-mid { height: 174px; background: #c8dcfe; border-bottom: 2px solid #7385a6; padding: 5px 0 0 265px; }
.desc { display: block; white-space: nowrap; }
.frag2 { display: block; width: 6px; height: 22px; margin: 35px 0 0 68px; background: linear-gradient(#8a2e44, #4aa6f4); }
.p-bot { flex: 1; background: #bbd0f0; padding: 36px 0 0 50px; }
.f-bot { grid-template-columns: 314px 258px 1fr; column-gap: 0; row-gap: 20px; grid-auto-rows: 38px; }
.f-bot .rl { margin-left: 46px; }
.ll { white-space: nowrap; }
.tight { letter-spacing: -.4px; }
.sel-box { display: flex; align-items: center; justify-content: space-between; height: 38px; padding: 0 8px 0 9px; background: #afc3e2; border: 2px solid #8c9fc0; }
.chev { width: 16px; height: 8px; }
```
FILE: heatmap.js
```js
(function () {
  var OX = 24, OY = 307, CELL = 9.3;
  var COLORS = ["#061a9e", "#351bc4", "#661ac1", "#8f1ad8", "#c71bd0", "#c62da6", "#c94d88", "#c98e88", "#cbc36c", "#c9dcb3"];
  var green = [
    [[80,556],[120,508],[163,499],[228,499],[254,508],[281,527],[292,551],[303,560],[303,593],[292,603],[283,622],[60,622]],
    [[558,200],[558,307],[538,327],[531,343],[531,372],[538,381],[547,393],[567,409],[585,426],[623,435],[700,437],[714,428],[723,416],[744,400],[770,390],[1040,390],[1072,428],[1090,437],[1118,452],[1145,473],[1173,499],[1182,527],[1191,565],[1200,603],[1210,629],[1228,648],[1246,667],[1267,676],[1292,676],[1320,667],[1340,667],[1600,667],[1600,454],[1340,454],[1327,445],[1301,419],[1292,400],[1283,353],[1274,324],[1267,307],[1267,200]],
    [[540,1083],[650,1083],[650,1300],[540,1300]],
    [[1040,1058],[1120,1058],[1120,1300],[1040,1300]]
  ];
  var m3 = [
    [[24,482],[60,447],[98,419],[143,399],[200,390],[219,390],[290,408],[319,428],[355,470],[373,492],[373,546],[355,565],[337,584],[326,603],[312,640],[60,640],[40,610],[24,590]],
    [[531,200],[1283,200],[1283,307],[1340,376],[1600,376],[1600,683],[1340,683],[1320,702],[1292,730],[1267,749],[1219,756],[1219,766],[1200,763],[1173,737],[1145,721],[1109,702],[1109,669],[1072,655],[1072,640],[1053,626],[1044,589],[1008,556],[1008,537],[980,518],[980,494],[962,490],[953,452],[953,405],[861,405],[861,428],[833,452],[815,485],[778,508],[732,527],[700,537],[632,546],[594,527],[549,513],[520,497],[500,482],[475,464],[475,452],[458,419],[466,393],[466,381],[475,364],[493,346],[502,327],[522,317],[531,307]],
    [[460,1300],[460,970],[487,943],[513,933],[576,921],[603,921],[647,933],[700,947],[730,970],[730,1300]],
    [[948,1300],[948,970],[971,952],[998,933],[1026,924],[1081,914],[1145,924],[1173,933],[1200,943],[1219,959],[1230,1300]]
  ];
  var blue = [
    [[24,307],[163,307],[172,317],[172,331],[163,334],[134,355],[107,364],[89,383],[80,395],[51,409],[33,416],[24,426]],
    [[301,307],[535,307],[504,317],[495,327],[475,336],[464,346],[446,364],[431,381],[402,397],[346,397],[339,386],[310,364],[290,346],[273,336],[263,343],[263,327],[281,317],[301,317]],
    [[411,527],[484,527],[511,546],[547,565],[576,584],[594,593],[700,603],[750,593],[778,584],[815,575],[835,563],[851,556],[907,556],[925,565],[934,589],[936,608],[953,631],[980,650],[998,678],[998,702],[1026,707],[1037,737],[1056,759],[1063,801],[1035,839],[998,853],[971,867],[943,888],[888,924],[861,952],[792,952],[750,919],[714,898],[700,893],[654,876],[585,867],[522,876],[484,888],[437,905],[413,921],[366,931],[340,931],[340,615],[326,603],[353,593],[375,574],[393,556],[411,546]],
    [[1340,695],[1320,716],[1301,737],[1292,759],[1274,777],[1267,792],[1239,796],[1237,815],[1191,815],[1209,825],[1191,843],[1191,867],[1200,886],[1219,881],[1228,919],[1237,924],[1253,943],[1265,975],[1345,975],[1345,695]],
    [[1292,300],[1345,300],[1345,346],[1310,325]]
  ];
  var navy = [
    [[328,610],[384,610],[384,603],[411,603],[411,610],[422,610],[422,619],[431,619],[431,629],[422,629],[422,638],[431,638],[431,657],[437,657],[437,667],[431,667],[431,676],[422,676],[422,648],[384,648],[375,638],[375,629],[355,629],[355,619],[328,619]],
    [[20,610],[54,610],[54,622],[20,622]],
    [[1301,300],[1345,300],[1345,324],[1329,324],[1329,316],[1301,316]]
  ];
  function inside(p, x, y) {
    var c = false;
    for (var i = 0, j = p.length - 1; i < p.length; j = i++) {
      if ((p[i][1] > y) !== (p[j][1] > y) &&
          x < (p[j][0] - p[i][0]) * (y - p[i][1]) / (p[j][1] - p[i][1]) + p[i][0]) c = !c;
    }
    return c;
  }
  function inAny(list, x, y) {
    for (var k = 0; k < list.length; k++) if (inside(list[k], x, y)) return true;
    return false;
  }
  function dist(list, x, y) {
    var best = 1e12;
    for (var k = 0; k < list.length; k++) {
      var p = list[k];
      for (var i = 0, j = p.length - 1; i < p.length; j = i++) {
        var ax = p[j][0], ay = p[j][1], dx = p[i][0] - ax, dy = p[i][1] - ay;
        var t = ((x - ax) * dx + (y - ay) * dy) / (dx * dx + dy * dy);
        t = t < 0 ? 0 : t > 1 ? 1 : t;
        var ex = ax + t * dx - x, ey = ay + t * dy - y, d = ex * ex + ey * ey;
        if (d < best) best = d;
      }
    }
    return Math.sqrt(best);
  }
  function level(x, y) {
    if (inAny(navy, x, y)) return 0;
    if (inAny(green, x, y)) return 9;
    if (inAny(m3, x, y)) {
      var g = dist(green, x, y), m = dist(m3, x, y), t = g / (g + m);
      if (t < 0.06) return 8;
      if (t < 0.13) return 7;
      if (t < 0.36) return 6;
      if (t < 0.52) return 5;
      if (t < 0.75) return 4;
      return 3;
    }
    return inAny(blue, x, y) ? 1 : 2;
  }
  var cv = document.getElementById("heat"), ctx = cv.getContext("2d");
  var cols = Math.ceil(cv.width / CELL), rows = Math.ceil(cv.height / CELL);
  for (var r = 0; r < rows; r++) {
    for (var c = 0; c < cols; c++) {
      var x0 = Math.round(c * CELL), x1 = Math.round((c + 1) * CELL);
      var y0 = Math.round(r * CELL), y1 = Math.round((r + 1) * CELL);
      ctx.fillStyle = COLORS[level(OX + (c + 0.5) * CELL, OY + (r + 0.5) * CELL)];
      ctx.fillRect(x0, y0, x1 - x0, y1 - y0);
    }
  }
  /* the building outline cuts the lower-left corner out of the plan */
  ctx.clearRect(0, 619 - OY, 356 - OX, 700);
  ctx.clearRect(0, 629 - OY, 365 - OX, 700);
  ctx.clearRect(1340 - OX, 0, 10, 700);
})();
```
